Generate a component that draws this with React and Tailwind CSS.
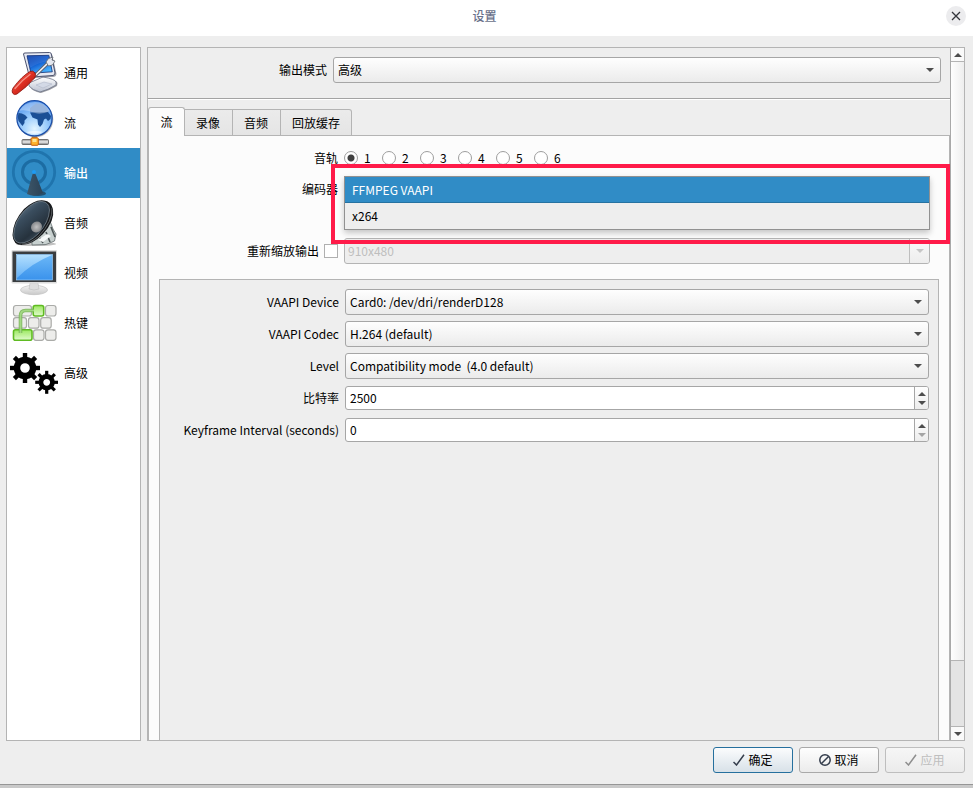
import React, { useState } from "react";

function GeneralIcon() {
  return (
    <svg viewBox="0 0 48 48" className="h-12 w-12 shrink-0" aria-hidden="true">
      <defs>
        <linearGradient id="gScreen" x1="0" y1="0" x2="0.6" y2="1">
          <stop offset="0" stopColor="#0a3ba8" />
          <stop offset="0.5" stopColor="#0f5bd0" />
          <stop offset="1" stopColor="#49b4ff" />
        </linearGradient>
        <linearGradient id="gHandle" x1="0" y1="0" x2="1" y2="1">
          <stop offset="0" stopColor="#ff7a68" />
          <stop offset="0.5" stopColor="#dd2f22" />
          <stop offset="1" stopColor="#8f120c" />
        </linearGradient>
        <linearGradient id="gBase" x1="0" y1="0" x2="0" y2="1">
          <stop offset="0" stopColor="#ffffff" />
          <stop offset="1" stopColor="#b9c0d0" />
        </linearGradient>
      </defs>
      <path d="M20 35 L35 29 Q47 31 47.500 34 L47 37 Q39 42 31 44 Q22 42 20 38Z" fill="#70727c" opacity="0.7" />
      <path d="M19 34 L33 28 Q45 30 46 33 L46 36 Q38 41 30 43 Q22 41 19 37Z" fill="url(#gBase)" stroke="#6f7689" strokeWidth="0.8" />
      <path d="M26 36 L34 33 L42 35 L33 39Z" fill="#d3d9e6" stroke="#a9b1c2" strokeWidth="0.5" />
      <path d="M14.500 5 L40 4.500 Q42 4.500 42.300 6 L46.500 25 Q46 28 43 28 L22 29Z" fill="#777b88" opacity="0.7" />
      <path d="M13.500 5 Q13.500 4 15 4 L39.500 3.500 Q41 3.500 41.300 5 L45 24 Q45 26 43 26.500 L22 28 Q19.500 28 19 26Z" fill="#e6e9f2" stroke="#4d5470" strokeWidth="1" />
      <path d="M17 6.800 L38.800 6.300 L42.300 22.800 L21 24.300Z" fill="url(#gScreen)" stroke="#0b2b72" strokeWidth="0.8" />
      <path d="M17.500 7 L38.800 6.500 L40 12 Q29 13 19.500 19Z" fill="#ffffff" opacity="0.1" />
      <path d="M23 28.500 L38 14" stroke="#5f6470" strokeWidth="3.400" strokeLinecap="round" />
      <path d="M23 28.500 L38 14" stroke="#f2f4f8" strokeWidth="1.600" strokeLinecap="round" />
      <path d="M36 13 L38.500 9.500 L43 8 L42 11 L45 12 L42.500 16 L38.500 17Z" fill="#e4e7ee" stroke="#60656f" strokeWidth="0.8" />
      <path d="M3 39 Q12 27 20 22.500 Q23 21 25 24 Q26.500 26.500 24.500 29 Q17 38 7 45 Q4 46.500 2.500 44 Q1.500 42 3 39Z" fill="url(#gHandle)" stroke="#8c130d" strokeWidth="0.8" />
      <path d="M5 39.500 Q12 31 20 25.500" stroke="#ffb5a9" strokeWidth="1.400" fill="none" strokeLinecap="round" opacity="0.7" />
    </svg>
  );
}

function StreamIcon() {
  return (
    <svg viewBox="0 0 48 48" className="h-12 w-12 shrink-0" aria-hidden="true">
      <defs>
        <radialGradient id="sGlobe" cx="0.5" cy="0.8" r="0.8">
          <stop offset="0" stopColor="#e2f5ff" />
          <stop offset="0.45" stopColor="#9ccdfc" />
          <stop offset="1" stopColor="#4a8eea" />
        </radialGradient>
        <linearGradient id="sBar" x1="0" y1="0" x2="0" y2="1">
          <stop offset="0" stopColor="#8d8d8d" />
          <stop offset="0.5" stopColor="#efefef" />
          <stop offset="1" stopColor="#777777" />
        </linearGradient>
      </defs>
      <circle cx="25.500" cy="20.500" r="17.800" fill="#777" opacity="0.5" />
      <rect x="22" y="36" width="5" height="5" fill="#8c8c8c" />
      <rect x="12" y="40.500" width="26.500" height="5" rx="1" fill="url(#sBar)" stroke="#5d5d5d" strokeWidth="0.8" />
      <rect x="21" y="38.800" width="7.300" height="7.500" rx="1" fill="#ffb42e" stroke="#c95e0b" strokeWidth="1" />
      <rect x="22.500" y="40" width="4" height="3" fill="#ffe48f" />
      <circle cx="24.500" cy="19.300" r="17.600" fill="url(#sGlobe)" stroke="#1b4ea8" strokeWidth="1.300" />
      <path d="M8.500 14 Q12 14 15 16 L17.500 18.500 L14.500 21.500 L14.500 24 L12.500 27 L8.500 22 Q7 18 8.500 14Z" fill="#1b4f95" />
      <path d="M20 13.500 L25 13 L31 12.500 L38 13 L41 17 L40.500 20 L38 22 L36 19.500 L34 20.500 L32.500 25 L30 28 L28 25.500 L27.500 20.500 L22.500 18.500Z" fill="#1b4f95" />
      <path d="M20 9 L26 4.500 L32 5 L37 9 L39 13 L30 13.500 L20 13Z" fill="#6c95cf" />
      <path d="M9 12 Q14 3.500 25 3 Q35 3 40 12 Q31 16 25 14 Q15 10 9 12Z" fill="#ffffff" opacity="0.3" />
      <path d="M16 33 Q24 37 33 33 Q26 31 16 33Z" fill="#ffffff" opacity="0.6" />
    </svg>
  );
}

function OutputIcon() {
  return (
    <svg viewBox="0 0 48 48" className="h-12 w-12 shrink-0" aria-hidden="true">
      <defs>
        <linearGradient id="oCone" x1="0" y1="0" x2="1" y2="0">
          <stop offset="0" stopColor="#3c5568" />
          <stop offset="1" stopColor="#2b4256" />
        </linearGradient>
      </defs>
      <circle cx="24" cy="23" r="20.700" fill="none" stroke="#1f74ad" strokeWidth="2.800" />
      <circle cx="24" cy="23" r="11.500" fill="none" stroke="#1c6ca3" strokeWidth="3" />
      <ellipse cx="28" cy="44.500" rx="8" ry="2.600" fill="#23506f" />
      <path d="M24 24 Q25.500 24 26.300 27 L33 44 Q25 49 17 45 L22 27 Q22.500 24 24 24Z" fill="url(#oCone)" />
      <circle cx="24" cy="23" r="2" fill="#1f9bf2" />
    </svg>
  );
}

function AudioIcon() {
  return (
    <svg viewBox="0 0 48 48" className="h-12 w-12 shrink-0" aria-hidden="true">
      <defs>
        <linearGradient id="aCone" x1="0.1" y1="0" x2="0.8" y2="1">
          <stop offset="0" stopColor="#74899a" />
          <stop offset="0.35" stopColor="#3a4d5e" />
          <stop offset="0.7" stopColor="#26323d" />
          <stop offset="1" stopColor="#4c5f6e" />
        </linearGradient>
        <radialGradient id="aDome">
          <stop offset="0" stopColor="#c2c2c2" />
          <stop offset="1" stopColor="#85878a" />
        </radialGradient>
      </defs>
      <ellipse cx="26" cy="45" rx="20" ry="2" fill="#999" opacity="0.6" />
      <path d="M22 42 L40 22 L43 30 L46 35 L44.500 42 L36 45.500 L22 46Z" fill="#c7d0cf" stroke="#666f70" strokeWidth="0.8" />
      <path d="M30 39 L33 44 M36 33 L40 43 M41 28 L45 38" stroke="#4c5556" strokeWidth="1.600" />
      <path d="M28 41 L37 35 L41 37 L33 43Z" fill="#f5f8f8" />
      <path d="M34 1.500 Q41 2 43 10 Q45 22 33 35 Q22 46 12 46 Q3 46 2.500 36 Q3 22 14 10 Q25 0 34 1.500Z" fill="#16191c" />
      <path d="M32 2.500 Q39 3 39.500 11 Q39 23 28 35 Q18 44.500 10 44 Q3.500 43 3.700 35 Q4.500 22 14.500 11.500 Q25 1.500 32 2.500Z" fill="url(#aCone)" stroke="#7c8b96" strokeWidth="0.7" />
      <ellipse cx="26.500" cy="28" rx="5.800" ry="5.200" fill="url(#aDome)" transform="rotate(-45 26.500 28)" />
      <path d="M42 9 Q43 22 29 37 Q20 45 12 45.200" stroke="#8a8f92" strokeWidth="0.6" fill="none" />
    </svg>
  );
}

function VideoIcon() {
  return (
    <svg viewBox="0 0 48 48" className="h-12 w-12 shrink-0" aria-hidden="true">
      <defs>
        <linearGradient id="vScreen" x1="0" y1="0" x2="0" y2="1">
          <stop offset="0" stopColor="#6cb8f7" />
          <stop offset="1" stopColor="#3a92ec" />
        </linearGradient>
        <linearGradient id="vGlare" x1="0" y1="0" x2="0" y2="1">
          <stop offset="0" stopColor="#bfe6ff" />
          <stop offset="1" stopColor="#6bb5f8" />
        </linearGradient>
        <linearGradient id="vStand" x1="0" y1="0" x2="0" y2="1">
          <stop offset="0" stopColor="#f5f5f5" />
          <stop offset="1" stopColor="#c8c8c8" />
        </linearGradient>
      </defs>
      <ellipse cx="24" cy="41" rx="13.500" ry="4.700" fill="url(#vStand)" stroke="#c0c0c0" strokeWidth="0.7" />
      <path d="M20 34 H28 L29 40 Q24 42 19 40Z" fill="#dedede" stroke="#b5b5b5" strokeWidth="0.5" />
      <rect x="1.500" y="1" width="45.500" height="33.500" rx="1" fill="#dcdcdc" />
      <rect x="2.500" y="2.500" width="43.500" height="30.500" fill="#3a3d40" />
      <rect x="6.500" y="5.500" width="36" height="25.500" fill="url(#vScreen)" stroke="#a9d8ff" strokeWidth="0.6" />
      <path d="M7 6 H42 Q22 14 7 29Z" fill="url(#vGlare)" opacity="0.85" />
    </svg>
  );
}

const grayKeys = [
  [3.5, 6.5, 18],
  [35.5, 6.5, 10.5],
  [3.5, 18.7, 13],
  [18.5, 18.7, 10.5],
  [30.7, 18.7, 10.5],
  [23.5, 30.8, 10.5],
  [35.5, 30.8, 10.5],
];
const greenKeys = [
  [23.2, 6.5, 10.5],
  [3.5, 30.8, 18.5],
];

function HotkeysIcon() {
  return (
    <svg viewBox="0 0 48 48" className="h-12 w-12 shrink-0" aria-hidden="true">
      <defs>
        <linearGradient id="hGreen" x1="0" y1="0" x2="0" y2="1">
          <stop offset="0" stopColor="#9be860" />
          <stop offset="1" stopColor="#e2fbcf" />
        </linearGradient>
      </defs>
      {grayKeys.map(([x, y, w]) => (
        <rect key={`${x}-${y}`} x={x} y={y} width={w} height="10.500" rx="2.500" fill="#ededeb" stroke="#aaaba8" strokeWidth="1.200" />
      ))}
      {greenKeys.map(([x, y, w]) => (
        <rect key={`${x}-${y}`} x={x} y={y} width={w} height="10.500" rx="2" fill="url(#hGreen)" stroke="#5fbb22" strokeWidth="1.600" />
      ))}
      <path d="M10.500 34 V17 Q10.500 11.500 15.500 11.500 H24" fill="none" stroke="#74b552" strokeWidth="3.600" opacity="0.85" />
      <path d="M10.500 34 V17 Q10.500 11.500 15.500 11.500 H24" fill="none" stroke="#a3d884" strokeWidth="1.600" />
    </svg>
  );
}

const teeth = [0, 45, 90, 135, 180, 225, 270, 315];

function Gear({ cx, cy, body, outer, hole, tooth }) {
  return (
    <g transform={`translate(${cx} ${cy})`}>
      <circle r={(body + hole) / 2} fill="none" stroke="#000" strokeWidth={body - hole} />
      {teeth.map((a) => (
        <rect key={a} x={-tooth / 2} y={-outer} width={tooth} height={outer - body + 1.5} transform={`rotate(${a})`} fill="#000" />
      ))}
    </g>
  );
}

function AdvancedIcon() {
  return (
    <svg viewBox="0 0 48 48" className="h-12 w-12 shrink-0" aria-hidden="true">
      <Gear cx={15} cy={19} body={11.3} outer={15} hole={4.8} tooth={4.4} />
      <Gear cx={36.7} cy={33.3} body={8.2} outer={11.5} hole={3.4} tooth={3.2} />
    </svg>
  );
}

const pages = [
  { label: "通用", Icon: GeneralIcon },
  { label: "流", Icon: StreamIcon },
  { label: "输出", Icon: OutputIcon, active: true },
  { label: "音频", Icon: AudioIcon },
  { label: "视频", Icon: VideoIcon },
  { label: "热键", Icon: HotkeysIcon },
  { label: "高级", Icon: AdvancedIcon },
];

function Arrow({ up = false, className = "text-[#4d4d4d]" }) {
  return (
    <svg viewBox="0 0 8 4" className={`h-1 w-2 shrink-0 ${className}`} aria-hidden="true">
      <path d={up ? "M0 4 L4 0 L8 4Z" : "M0 0 H8 L4 4Z"} fill="currentColor" />
    </svg>
  );
}

function ComboBox({ id, value }) {
  return (
    <div className="relative min-w-0 flex-1">
      <select
        id={id}
        className="block h-[26px] w-full appearance-none rounded-[3px] border border-[#a6a6a6] bg-linear-to-b from-[#fefefe] to-[#ebebeb] pl-1 pr-6 text-black outline-none"
      >
        <option>{value}</option>
      </select>
      <span className="pointer-events-none absolute inset-y-0 right-[7px] flex items-center">
        <Arrow />
      </span>
    </div>
  );
}

function SpinBox({ id, initial, atMinimum = false }) {
  const [value, setValue] = useState(initial);
  return (
    <div className="my-px flex h-6 min-w-0 flex-1 overflow-hidden rounded-[3px] border border-[#a6a6a6] bg-white">
      <input
        id={id}
        type="text"
        inputMode="numeric"
        value={value}
        onChange={(e) => setValue(e.target.value)}
        className="min-w-0 flex-1 bg-transparent pl-1 text-black outline-none"
      />
      <div className="flex w-3.5 flex-col border-l border-[#a6a6a6] bg-linear-to-b from-[#fefefe] to-[#ededed]">
        <button type="button" aria-label="+" className="flex flex-1 items-center justify-center pt-0.5">
          <Arrow up />
        </button>
        <button type="button" aria-label="-" className="flex flex-1 items-center justify-center pb-0.5">
          <Arrow className={atMinimum ? "text-[#a5a5a5]" : "text-[#4d4d4d]"} />
        </button>
      </div>
    </div>
  );
}

function Field({ id, label, children }) {
  return (
    <div className="flex items-center gap-1.5">
      <label htmlFor={id} className="w-[170px] shrink-0 text-right">
        {label}
      </label>
      {children}
    </div>
  );
}

function CheckMark() {
  return (
    <svg viewBox="0 0 12 12" className="h-3 w-3" aria-hidden="true">
      <path d="M0.500 8 L3.500 11 L11 0.800" fill="none" stroke="currentColor" strokeWidth="1.500" />
    </svg>
  );
}

function Tracks() {
  const [track, setTrack] = useState(1);
  return (
    <div role="radiogroup" aria-labelledby="track-label" className="flex h-4">
      {[1, 2, 3, 4, 5, 6].map((n) => (
        <label key={n} className="flex w-[38px] items-center gap-1.5">
          <input
            type="radio"
            name="track"
            checked={track === n}
            onChange={() => setTrack(n)}
            className="h-3.5 w-3.5 shrink-0 appearance-none rounded-full border border-[#9e9e9e] bg-white checked:bg-[radial-gradient(circle,#404040_3px,#ffffff_4px)]"
          />
          {n}
        </label>
      ))}
    </div>
  );
}

export default function App() {
  return (
    <div className="flex h-screen flex-col bg-[#eeeeee] font-['Noto_Sans_CJK_SC','Noto_Sans',sans-serif] text-[12px] leading-4 text-black">
      <header className="relative flex h-9 shrink-0 items-center justify-center bg-white pb-1 pr-1">
        <h1 className="font-medium text-[#69718a]">设置</h1>
        <button
          type="button"
          aria-label="关闭"
          className="absolute right-[7px] top-1.5 flex h-5 w-5 items-center justify-center rounded-full bg-[#ececee] text-[#33353b]"
        >
          <svg viewBox="0 0 10 10" className="h-2.5 w-2.5" aria-hidden="true">
            <path d="M1 1 L9 9 M9 1 L1 9" stroke="currentColor" strokeWidth="1.300" />
          </svg>
        </button>
      </header>

      <div className="flex min-h-0 flex-1 gap-1.5 pl-1.5 pr-2 pt-[11px]">
        <nav className="w-[135px] shrink-0 border border-[#b4b4b4] bg-white">
          {pages.map(({ label, Icon, active }) => (
            <button
              key={label}
              type="button"
              aria-current={active ? "page" : undefined}
              className={
                active
                  ? "flex h-[50px] w-full items-center gap-1.5 bg-[#308cc6] pl-[3px] font-medium text-white"
                  : "flex h-[50px] w-full items-center gap-1.5 pl-[3px]"
              }
            >
              <Icon />
              {label}
            </button>
          ))}
        </nav>

        <main className="flex min-w-0 flex-1 border border-[#b4b4b4]">
          <div className="flex min-w-0 flex-1 flex-col overflow-hidden">
            <div className="flex items-center gap-1.5 pr-[9px] pt-[9px]">
              <label htmlFor="mode" className="w-[179px] shrink-0 text-right">
                输出模式
              </label>
              <ComboBox id="mode" value="高级" />
            </div>
            <div className="mt-[15px] h-0.5 shrink-0 border-t border-[#a3a3a3] bg-white" />

            <div role="tablist" className="z-10 mt-[7px] -mb-px flex shrink-0 items-end">
              <button
                type="button"
                role="tab"
                aria-selected="true"
                className="h-[29px] w-[37px] rounded-t-[3px] border border-b-0 border-[#b4b4b4] bg-[#fcfcfc]"
              >
                流
              </button>
              {["录像", "音频", "回放缓存"].map((tab) => (
                <button
                  key={tab}
                  type="button"
                  role="tab"
                  aria-selected="false"
                  className="h-[27px] border border-l-0 border-[#b4b4b4] bg-linear-to-b from-[#ebebeb] to-[#e5e5e5] pl-[11px] pr-3 last:rounded-tr-[3px] last:pr-[11px]"
                >
                  {tab}
                </button>
              ))}
            </div>

            <section
              role="tabpanel"
              className="flex min-h-0 flex-1 flex-col border border-b-0 border-[#b4b4b4] bg-[#fcfcfc] px-2.5 pt-3.5"
            >
              <div className="flex items-center gap-1.5 pr-[9px]">
                <span id="track-label" className="w-[179px] shrink-0 text-right">
                  音轨
                </span>
                <Tracks />
              </div>

              <div className="relative mt-2.5 flex h-[54px] gap-1.5 pr-[9px]">
                <span id="encoder-label" className="w-[179px] shrink-0 pt-[5px] text-right">
                  编码器
                </span>
                <div
                  role="listbox"
                  aria-labelledby="encoder-label"
                  className="flex flex-1 flex-col border border-[#919191] bg-[#eeeeee] shadow-[0_3px_6px_rgba(0,0,0,0.22)]"
                >
                  <button
                    type="button"
                    role="option"
                    aria-selected="true"
                    className="h-[26px] border-b border-[#2672a1] bg-[#308cc6] pl-[7px] text-left text-white"
                  >
                    FFMPEG VAAPI
                  </button>
                  <button type="button" role="option" aria-selected="false" className="h-[26px] pl-[7px] text-left">
                    x264
                  </button>
                </div>
                <div className="pointer-events-none absolute -inset-y-3 -right-[11px] left-[172px] z-10 -mb-0.5 border-4 border-[#ff1b49]" />
              </div>

              <div className="mt-2 flex items-center gap-1.5 pr-[9px]">
                <div className="flex w-[179px] shrink-0 items-center justify-end gap-[5px]">
                  <label htmlFor="rescale">重新缩放输出</label>
                  <input
                    id="rescale"
                    type="checkbox"
                    className="h-3.5 w-3.5 appearance-none border border-[#b0b0b0] bg-white checked:bg-[#308cc6]"
                  />
                </div>
                <div className="flex h-[26px] flex-1 overflow-hidden rounded-[3px] border border-[#b4b4b4] bg-[#eeeeee]">
                  <input
                    type="text"
                    disabled
                    aria-label="重新缩放输出"
                    defaultValue="910x480"
                    className="min-w-0 flex-1 bg-transparent pl-[3px] text-[#bebebe]"
                  />
                  <span className="flex w-5 items-center justify-center border-l border-[#bebebe] bg-linear-to-b from-[#fafafa] to-[#ededed]">
                    <Arrow className="text-[#c6c6c6]" />
                  </span>
                </div>
              </div>

              <div className="mt-[15px] flex min-h-0 flex-1 flex-col gap-1.5 border border-b-0 border-[#b4b4b4] bg-[#eeeeee] px-[9px] pt-[9px]">
                <EncoderSettings />
              </div>
            </section>
          </div>

          <div className="flex w-3.5 shrink-0 flex-col border-l border-[#a9a9a9] bg-[#e4e4e4]">
            <button
              type="button"
              aria-label="向上滚动"
              className="flex h-3.5 shrink-0 items-center justify-center border-b border-[#b4b4b4] bg-[#fafafa]"
            >
              <Arrow up />
            </button>
            <div className="h-[599px] min-h-0 shrink border-b border-[#b4b4b4] bg-linear-to-r from-[#fefefe] to-[#eeeeee]" />
            <div className="min-h-8 flex-1" />
            <button
              type="button"
              aria-label="向下滚动"
              className="flex h-3.5 shrink-0 items-center justify-center border-t border-[#b4b4b4] bg-[#fafafa]"
            >
              <Arrow />
            </button>
          </div>
        </main>
      </div>

      <footer className="flex shrink-0 justify-end gap-1.5 pb-[11px] pr-2 pt-1.5">
        <button
          type="button"
          className="flex h-[26px] w-20 items-center justify-center gap-[3px] rounded-[3px] border border-[#26709e] bg-linear-to-b from-[#fbfcfd] to-[#d8e1e8]"
        >
          <span className="text-[#343d4c]">
            <CheckMark />
          </span>
          确定
        </button>
        <button
          type="button"
          className="flex h-[26px] w-20 items-center justify-center gap-[3px] rounded-[3px] border border-[#a9a9a9] bg-linear-to-b from-[#fefefe] to-[#ebebeb]"
        >
          <svg viewBox="0 0 12 12" className="h-3 w-3 text-[#343d4c]" aria-hidden="true">
            <circle cx="6" cy="6" r="5.200" fill="none" stroke="currentColor" strokeWidth="1.500" />
            <path d="M2.500 9.500 L9.500 2.500" stroke="currentColor" strokeWidth="1.500" />
          </svg>
          取消
        </button>
        <button
          type="button"
          disabled
          className="flex h-[26px] w-20 items-center justify-center gap-[3px] rounded-[3px] border border-[#bebebe] bg-linear-to-b from-[#f6f6f6] to-[#ebebeb] text-[#bebebe]"
        >
          <span className="text-[#8e8e8e]">
            <CheckMark />
          </span>
          应用
        </button>
      </footer>
      <div className="h-1 shrink-0 border-t border-[#969696] bg-[#c9c9c9]" />
    </div>
  );
}

function EncoderSettings() {
  return (
    <>
      <Field id="device" label="VAAPI Device">
        <ComboBox id="device" value="Card0: /dev/dri/renderD128" />
      </Field>
      <Field id="codec" label="VAAPI Codec">
        <ComboBox id="codec" value="H.264 (default)" />
      </Field>
      <Field id="level" label="Level">
        <ComboBox id="level" value={"Compatibility mode\u00a0 (4.0 default)"} />
      </Field>
      <Field id="bitrate" label="比特率">
        <SpinBox id="bitrate" initial="2500" />
      </Field>
      <Field id="keyframe" label="Keyframe Interval (seconds)">
        <SpinBox id="keyframe" initial="0" atMinimum />
      </Field>
    </>
  );
}
